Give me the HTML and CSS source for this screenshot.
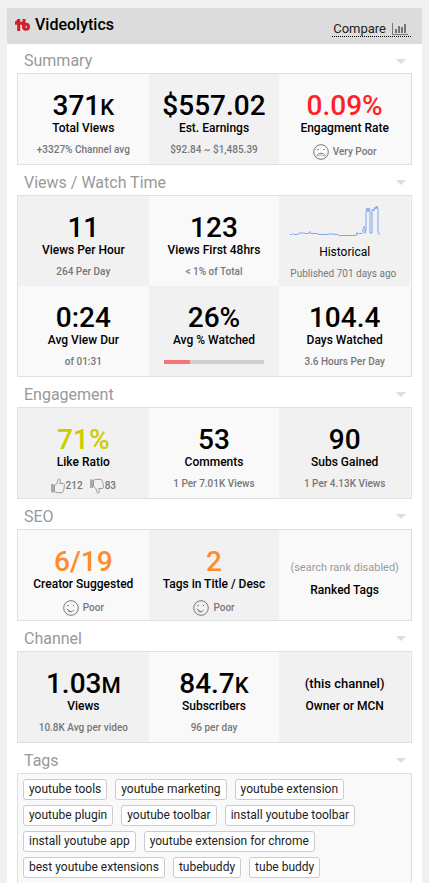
FILE: index.html
```html
<!DOCTYPE html>
<html lang="en">
<head>
<meta charset="utf-8">
<meta name="viewport" content="width=device-width, initial-scale=1">
<title>Videolytics</title>
<link rel="stylesheet" href="styles.css">
</head>
<body>
<svg class="sprite" aria-hidden="true">
  <symbol id="very-poor" viewBox="0 0 16 16"><circle cx="8" cy="8" r="7.300"/><path d="M3.800 12c1.200-3.600 7.200-3.600 8.400 0M4.500 5.500h1M10.500 5.500h1M5 5v1M11 5v1"/><path class="faint" d="M4 12c2-1.200 6-1.200 8 0"/></symbol>
  <symbol id="poor" viewBox="0 0 16 16"><circle cx="8" cy="8" r="7.300"/><path d="M3.800 9l4.200 2.800M5.500 11.500c1.800.9 3.600.3 5-1.300M5 5v1.200M10.500 5v1.200M4.500 5.500h1M10 5.500h1"/></symbol>
  <symbol id="thumb" viewBox="0 0 14 16"><path class="solid" d="M0 6h3v8.500H0z"/><path d="M3.500 7.500C6 6.500 6.500 4 7.200 1.500c.4-1.200 2.300-.6 2.100 1L8.800 5.500h3.500c1.500.2 1.500 1.800.8 2.500.4.800.2 1.700-.2 2.200.2.800.1 1.500-.5 2.100 0 1.200-.5 2-1.500 2.200-2.500.4-5.500.2-7.400-.7z"/></symbol>
</svg>
<main class="panel">
  <header class="topbar">
    <h1 class="brand">
      <svg class="logo" viewBox="0 0 15 12" aria-hidden="true"><path d="M3.700 0v12M0 4.300h7.500M.7 4L4 1.300M9 0v8"/><circle cx="11" cy="7.800" r="2.500"/></svg>
      Videolytics
    </h1>
    <a class="compare" href="#compare">Compare
      <svg class="bars" viewBox="0 0 16 12" aria-hidden="true"><path class="axis" d="M.5 0v11.500H16"/><path d="M3 6h2v4H3zM6 3h2v7H6zM9 4h2v6H9zM12 1h2v9h-2z"/></svg>
    </a>
  </header>

  <section class="group">
    <h2><button class="toggle" type="button">Summary</button></h2>
    <div class="grid">
      <div class="cell"><p class="value">371<span class="unit">K</span></p><p class="label">Total Views</p><p class="note">+3327% Channel avg</p></div>
      <div class="cell"><p class="value">$557.02</p><p class="label">Est. Earnings</p><p class="note">$92.84 ~ $1,485.39</p></div>
      <div class="cell"><p class="value red">0.09%</p><p class="label">Engagment Rate</p><p class="note rating"><svg class="face" aria-hidden="true"><use href="#very-poor"/></svg>Very Poor</p></div>
    </div>
  </section>

  <section class="group">
    <h2><button class="toggle" type="button">Views / Watch Time</button></h2>
    <div class="grid alt">
      <div class="cell"><p class="value">11</p><p class="label">Views Per Hour</p><p class="note">264 Per Day</p></div>
      <div class="cell"><p class="value">123</p><p class="label">Views First 48hrs</p><p class="note">&lt; 1% of Total</p></div>
      <div class="cell history">
        <svg class="spark" viewBox="0 0 90 32" aria-hidden="true"><path d="M0 29.500h2l1-1 1 1h4l1-1.500h5l1 .5h4l1-2 1 2h6l2 1h8l1-.5h6l1 .5h3l1 1h17l1-3 1 2 1-1h3l1-1v-4l1-2 1 2v5l1-4V6l1-3 1 4 1-4 1 2V28h2V5l1-1 1 2 1-4 1 2 1-3 1 3v23l1 2h4"/></svg>
        <p class="label">Historical</p><p class="note">Published 701 days ago</p>
      </div>
      <div class="cell"><p class="value">0:24</p><p class="label">Avg View Dur</p><p class="note">of 01:31</p></div>
      <div class="cell"><p class="value">26%</p><p class="label" id="watched">Avg % Watched</p><progress class="meter" max="100" value="26" aria-labelledby="watched"></progress></div>
      <div class="cell"><p class="value">104.4</p><p class="label">Days Watched</p><p class="note">3.6 Hours Per Day</p></div>
    </div>
  </section>

  <section class="group">
    <h2><button class="toggle" type="button">Engagement</button></h2>
    <div class="grid alt">
      <div class="cell"><p class="value olive">71%</p><p class="label">Like Ratio</p><p class="note votes"><span class="vote"><svg class="thumb" aria-hidden="true"><use href="#thumb"/></svg>212</span><span class="vote"><svg class="thumb down" aria-hidden="true"><use href="#thumb"/></svg>83</span></p></div>
      <div class="cell"><p class="value">53</p><p class="label">Comments</p><p class="note">1 Per 7.01K Views</p></div>
      <div class="cell"><p class="value">90</p><p class="label">Subs Gained</p><p class="note">1 Per 4.13K Views</p></div>
    </div>
  </section>

  <section class="group">
    <h2><button class="toggle" type="button">SEO</button></h2>
    <div class="grid">
      <div class="cell"><p class="value orange">6/19</p><p class="label">Creator Suggested</p><p class="note rating"><svg class="face" aria-hidden="true"><use href="#poor"/></svg>Poor</p></div>
      <div class="cell"><p class="value orange">2</p><p class="label">Tags in Title / Desc</p><p class="note rating"><svg class="face" aria-hidden="true"><use href="#poor"/></svg>Poor</p></div>
      <div class="cell disabled"><p class="value">(search rank disabled)</p><p class="label">Ranked Tags</p></div>
    </div>
  </section>

  <section class="group">
    <h2><button class="toggle" type="button">Channel</button></h2>
    <div class="grid alt">
      <div class="cell"><p class="value">1.03<span class="unit">M</span></p><p class="label">Views</p><p class="note">10.8K Avg per video</p></div>
      <div class="cell"><p class="value">84.7<span class="unit">K</span></p><p class="label">Subscribers</p><p class="note">96 per day</p></div>
      <div class="cell"><p class="value text">(this channel)</p><p class="label">Owner or MCN</p></div>
    </div>
  </section>

  <section class="group last">
    <h2><button class="toggle" type="button">Tags</button></h2>
    <ul class="tags">
      <li>youtube tools</li><li>youtube marketing</li><li>youtube extension</li>
      <li>youtube plugin</li><li>youtube toolbar</li><li>install youtube toolbar</li>
      <li>install youtube app</li><li>youtube extension for chrome</li>
      <li>best youtube extensions</li><li>tubebuddy</li><li>tube buddy</li>
    </ul>
  </section>
</main>
</body>
</html>
```
FILE: styles.css
```css
* { box-sizing: border-box; }

body {
  display: flex;
  min-height: 100vh;
  margin: 0;
  padding: 8px 7px 0;
  background: #f0f0f0;
  color: #000;
  font-family: Roboto, "Liberation Sans", sans-serif;
}

h1, h2, p, ul { margin: 0; padding: 0; font-weight: 400; }

.sprite { position: absolute; width: 0; height: 0; }

.panel {
  display: flex;
  flex: 1;
  flex-direction: column;
  background: #fff;
}

.topbar {
  display: flex;
  align-items: center;
  justify-content: space-between;
  height: 36px;
  padding: 0 11px 0 8px;
  background: #dcdcdc;
}

.brand {
  display: flex;
  align-items: center;
  gap: 5px;
  padding-bottom: 3px;
  font-size: 16px;
  font-weight: 500;
}

.logo {
  width: 15px;
  height: 12px;
  fill: none;
  stroke: #cf2027;
  stroke-width: 3;
}

.compare {
  display: flex;
  align-items: center;
  gap: 6px;
  padding: 0 3px 0 1px;
  margin-top: 6px;
  border-bottom: 1px dotted #000;
  color: #222;
  font-size: 13px;
  line-height: 14px;
  text-decoration: none;
}

.bars { width: 16px; height: 12px; fill: #777; }
.bars .axis { fill: none; stroke: #777; }

.group { padding: 0 10px; }

.toggle {
  display: flex;
  align-items: center;
  justify-content: space-between;
  width: 100%;
  height: 30px;
  padding: 5px 6px 0 7px;
  border: 0;
  background: none;
  color: #999;
  font: 400 16px/20px Roboto, "Liberation Sans", sans-serif;
}

.topbar + .group .toggle { height: 29px; }

.toggle::after {
  content: "";
  border: 5px solid transparent;
  border-top-color: #ddd;
  border-bottom: 0;
}

.grid {
  display: grid;
  grid-template-columns: repeat(3, 1fr);
  padding-right: 1px;
  border: 1px solid #e0e0e0;
  background: #f9f9f9;
}

.cell {
  min-height: 90px;
  padding-top: 16px;
  text-align: center;
}

.cell:nth-child(even), .alt .cell:nth-child(odd) { background: #f1f1f1; }
.cell:nth-child(odd), .alt .cell:nth-child(even) { background: #f9f9f9; }

.value { font-size: 28px; font-weight: 500; line-height: 31px; }
.unit { font-size: 22px; line-height: 1; }
.value.text { font-size: 13px; }
.red { color: #ff1f27; }
.olive { color: #cccc00; }
.orange { color: #ff8c2a; }

.label { font-size: 12px; font-weight: 500; line-height: 14px; }

.note {
  margin-top: 8px;
  color: #777;
  font-size: 10px;
  font-weight: 500;
  line-height: 14px;
}

.rating, .votes {
  display: flex;
  align-items: center;
  justify-content: center;
  gap: 4px;
  line-height: 18px;
}

.votes { gap: 7px; }
.vote { display: flex; align-items: center; gap: 1px; }

.face { width: 16px; height: 16px; fill: none; stroke: #777; }
.faint { stroke: #bbb; }
.thumb { width: 14px; height: 16px; fill: none; stroke: #999; }
.solid { fill: #aaa; stroke: none; }
.down { transform: scaleY(-1); }

.history { padding: 9px 0 0 11px; text-align: left; }
.history .spark { display: block; width: 90px; height: 32px; fill: none; stroke: #7fa6f0; }
.history .label { padding-right: 11px; margin-top: 8px; font-weight: 400; text-align: center; }
.history .note { font-weight: 400; }

.meter {
  display: block;
  width: 100px;
  height: 4px;
  margin: 13px auto 0;
  border: 0;
  appearance: none;
}

.meter::-webkit-progress-bar { background: #d0d0d0; }
.meter::-webkit-progress-value { background: #f57575; }

.disabled { padding-top: 22px; }
.disabled .value { color: #999; font-size: 11px; font-weight: 400; }

.last { display: flex; flex: 1; flex-direction: column; }

.tags {
  display: flex;
  flex: 1;
  flex-wrap: wrap;
  align-content: flex-start;
  gap: 5px 8px;
  padding: 5px 5px 0;
  border: 1px solid #e0e0e0;
  border-bottom: 0;
  background: #f9f9f9;
  list-style: none;
}

.tags li {
  padding: 0 5px;
  border: 1px solid #ccc;
  border-radius: 3px;
  background: #fff;
  color: #222;
  font-size: 12px;
  line-height: 19px;
}
```
